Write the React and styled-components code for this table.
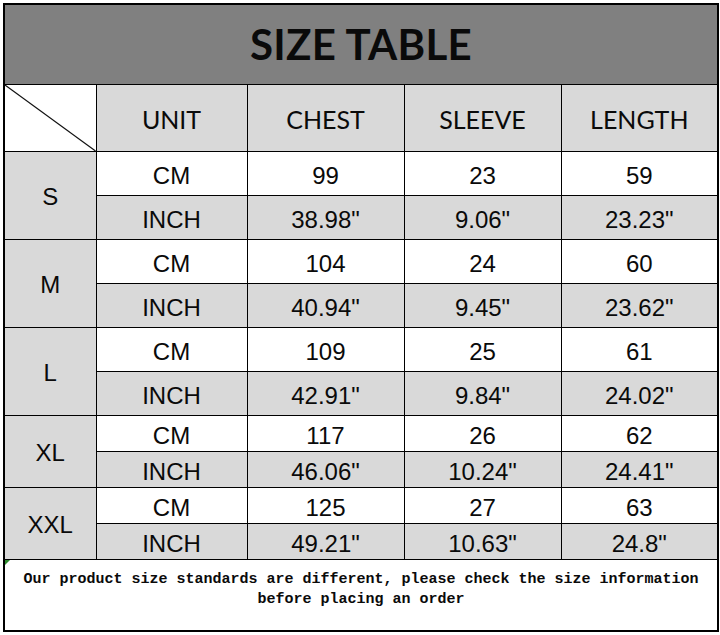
import styled, { createGlobalStyle } from "styled-components";

const GlobalStyle = createGlobalStyle`
  body {
    margin: 0;
    background: #fff;
    font-family: "Liberation Sans", Arial, sans-serif;
  }
`;

const sizes = [
  { name: "S", cm: ["99", "23", "59"], inch: ['38.98"', '9.06"', '23.23"'], h: 44 },
  { name: "M", cm: ["104", "24", "60"], inch: ['40.94"', '9.45"', '23.62"'], h: 44 },
  { name: "L", cm: ["109", "25", "61"], inch: ['42.91"', '9.84"', '24.02"'], h: 44 },
  { name: "XL", cm: ["117", "26", "62"], inch: ['46.06"', '10.24"', '24.41"'], h: 36 },
  { name: "XXL", cm: ["125", "27", "63"], inch: ['49.21"', '10.63"', '24.8"'], h: 36 },
];

export default function App() {
  return (
    <>
      <GlobalStyle />
      <Wrap>
        <Table>
          <colgroup>
            <col style={{ width: 92 }} />
            <col style={{ width: 151 }} />
            <col style={{ width: 157 }} />
            <col style={{ width: 157 }} />
            <col style={{ width: 157 }} />
          </colgroup>
          <tbody>
            <TitleRow>
              <Title colSpan={5}>SIZE TABLE</Title>
            </TitleRow>
            <HeadRow>
              <Corner>
                <svg width="100%" height="100%" viewBox="0 0 92 67" preserveAspectRatio="none">
                  <line x1="0" y1="0" x2="92" y2="67" stroke="#111" strokeWidth="1.2" />
                </svg>
              </Corner>
              <Head>UNIT</Head>
              <Head>CHEST</Head>
              <Head>SLEEVE</Head>
              <Head>LENGTH</Head>
            </HeadRow>
            {sizes.map((s) => (
              <SizeGroup key={s.name} size={s} />
            ))}
            <NoteRow>
              <Note colSpan={5}>
                Our product size standards are different, please check the size information
                <br />
                before placing an order
              </Note>
            </NoteRow>
          </tbody>
        </Table>
      </Wrap>
    </>
  );
}

function SizeGroup({ size }) {
  return (
    <>
      <DataRow $h={size.h}>
        <SizeCell rowSpan={2}>{size.name}</SizeCell>
        <Cell>CM</Cell>
        {size.cm.map((v, i) => (
          <Cell key={i}>{v}</Cell>
        ))}
      </DataRow>
      <DataRow $h={size.h}>
        <Cell $gray>INCH</Cell>
        {size.inch.map((v, i) => (
          <Cell $gray key={i}>{v}</Cell>
        ))}
      </DataRow>
    </>
  );
}

const Wrap = styled.div`
  padding: 3px 0 0 3px;
`;

const Table = styled.table`
  width: 714px;
  table-layout: fixed;
  border-collapse: collapse;
  border: 2px solid #000;

  td {
    border: 1px solid #000;
    padding: 0;
    text-align: center;
    vertical-align: middle;
    color: #0a0a0a;
  }
`;

const TitleRow = styled.tr`
  height: 80px;
`;

const Title = styled.td`
  background: #808080;
  font-family: Lato, "Open Sans", sans-serif;
  font-weight: 700;
  font-size: 42px;
  letter-spacing: 0.3px;
  line-height: 1;
`;

const HeadRow = styled.tr`
  height: 67px;
`;

const DataRow = styled.tr`
  height: ${(p) => p.$h}px;
`;

const NoteRow = styled.tr`
  height: 72px;
`;

const Corner = styled.td`
  background: #fff;
  height: 66px;

  svg {
    display: block;
  }
`;

const Head = styled.td`
  background: #d9d9d9;
  font-family: Lato, "Open Sans", sans-serif;
  font-size: 25px;
  line-height: 1;
  padding-top: 4px !important;
`;

const SizeCell = styled.td`
  background: #d9d9d9;
  font-size: 24px;
  padding-top: 3px !important;
`;

const Cell = styled.td`
  background: ${(p) => (p.$gray ? "#d9d9d9" : "#fff")};
  font-size: 24px;
  line-height: 1;
  padding-top: 5px !important;
`;

const Note = styled.td`
  position: relative;
  vertical-align: top !important;
  padding-top: 10px !important;
  font-family: "Liberation Mono", "Courier New", monospace;
  font-weight: 700;
  font-size: 15px;
  line-height: 20px;

  &::before {
    content: "";
    position: absolute;
    left: 0;
    top: 0;
    border-top: 5px solid #2e8b2e;
    border-right: 5px solid transparent;
  }
`;
